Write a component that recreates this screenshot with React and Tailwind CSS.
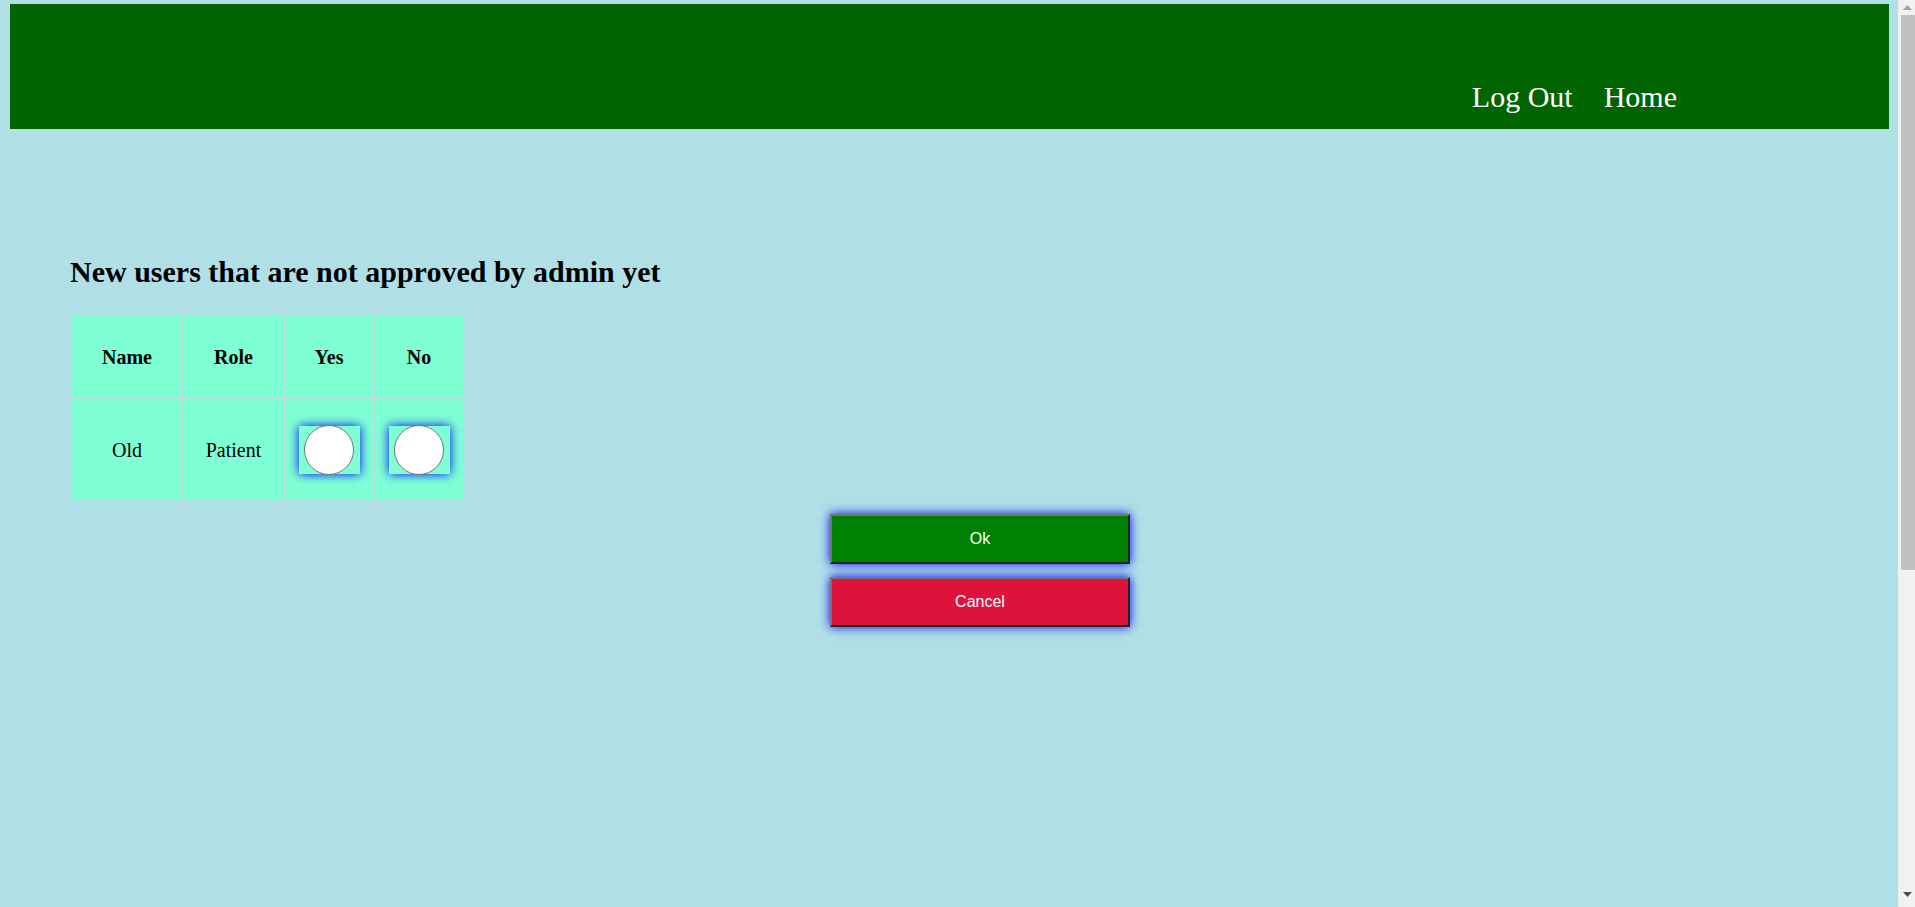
import React from 'react'

const serif = "font-['Liberation_Serif','Times_New_Roman',serif]"

const Radio = () => (
    <div className='w-[61px] h-[48px] bg-[#7fffd4] shadow-[0_0_10px_#0000ff] flex items-center justify-center'>
        <div className='w-[50px] h-[50px] shrink-0 rounded-full bg-white border border-[#767676]' />
    </div>
)

const Scrollbar = () => (
    <div className='w-[17px] h-full bg-[#f1f1f1] flex flex-col items-end'>
        <div className='w-full h-[15px] flex items-center justify-center pl-[2px]'>
            <svg width='9' height='5' viewBox='0 0 9 5'><polygon points='4.5,0 9,5 0,5' fill='#a3a3a3' /></svg>
        </div>
        <div className='w-[14px] h-[555px] bg-[#c1c1c1]' />
        <div className='flex-1' />
        <div className='w-full h-[20px] flex items-start justify-center pl-[2px] pt-[5px]'>
            <svg width='9' height='5' viewBox='0 0 9 5'><polygon points='0,0 9,0 4.5,5' fill='#505050' /></svg>
        </div>
    </div>
)

const App = () => {
    return (
        <div className='h-[907px] flex overflow-hidden'>
            <div className={`flex-1 bg-[#b0e0e6] pt-[4px] ${serif}`}>
                {/* Header */}
                <div className='ml-[10px] mr-[9px] h-[125px] bg-[#006400] flex items-end justify-end pr-[212px] pb-[15px] gap-[31px] text-white text-[30px] leading-[34px]'>
                    <a className='cursor-pointer'>Log Out</a>
                    <a className='cursor-pointer'>Home</a>
                </div>

                <h1 className='mt-[125px] ml-[70px] text-[30px] leading-[35px] font-bold text-black'>
                    New users that are not approved by admin yet
                </h1>

                {/* Table */}
                <div className='mt-[26px] ml-[72px] w-[391px] grid grid-cols-[110px_99px_88px_88px] grid-rows-[83px_99px] gap-[2px] bg-[#c6d9e2] text-[20px] text-black'>
                    <div className='bg-[#7fffd4] flex items-center justify-center font-bold'>Name</div>
                    <div className='bg-[#7fffd4] flex items-center justify-center font-bold'>Role</div>
                    <div className='bg-[#7fffd4] flex items-center justify-center font-bold'>Yes</div>
                    <div className='bg-[#7fffd4] flex items-center justify-center font-bold'>No</div>
                    <div className='bg-[#7fffd4] flex items-center justify-center'>Old</div>
                    <div className='bg-[#7fffd4] flex items-center justify-center'>Patient</div>
                    <div className='bg-[#7fffd4] flex items-center justify-center'><Radio /></div>
                    <div className='bg-[#7fffd4] flex items-center justify-center'><Radio /></div>
                </div>

                {/* Buttons */}
                <div className="mt-[15px] ml-[830px] w-[300px] flex flex-col gap-[13px] font-['Liberation_Sans',Arial,sans-serif] text-[16px] text-white">
                    <button className='h-[50px] bg-[#008000] border-2 border-t-[#767676] border-l-[#767676] border-b-[#222] border-r-[#222] shadow-[0_0_10px_#0000ff]'>
                        Ok
                    </button>
                    <button className='h-[50px] bg-[#dc143c] border-2 border-t-[#767676] border-l-[#767676] border-b-[#222] border-r-[#222] shadow-[0_0_10px_#0000ff]'>
                        Cancel
                    </button>
                </div>
            </div>
            <Scrollbar />
        </div>
    )
}

export default App
